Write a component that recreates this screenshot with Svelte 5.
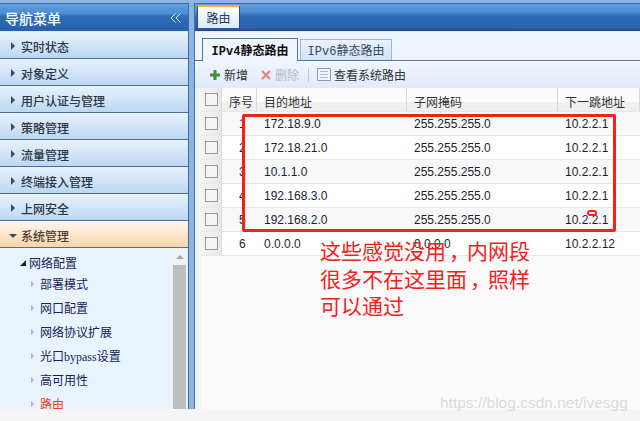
<script lang="ts">
    const navItems = ['实时状态', '对象定义', '用户认证与管理', '策略管理', '流量管理', '终端接入管理', '上网安全'];
    const treeItems = ['部署模式', '网口配置', '网络协议扩展', '光口bypass设置', '高可用性', '路由'];
    const routes = [
        { id: 1, dest: '172.18.9.0', mask: '255.255.255.0', hop: '10.2.2.1' },
        { id: 2, dest: '172.18.21.0', mask: '255.255.255.0', hop: '10.2.2.1' },
        { id: 3, dest: '10.1.1.0', mask: '255.255.255.0', hop: '10.2.2.1' },
        { id: 4, dest: '192.168.3.0', mask: '255.255.255.0', hop: '10.2.2.1' },
        { id: 5, dest: '192.168.2.0', mask: '255.255.255.0', hop: '10.2.2.1' },
        { id: 6, dest: '0.0.0.0', mask: '0.0.0.0', hop: '10.2.2.12' }
    ];
</script>

<div class="page">
    <div class="frame">
        <aside class="sidebar">
            <header class="side-head">
                <span>导航菜单</span>
                <svg width="12" height="10" viewBox="0 0 12 10" fill="none" stroke="#dce9f8" stroke-width="1">
                    <path d="M5.5 .5 1 5l4.5 4.5M10.5 .5 6 5l4.5 4.5" />
                </svg>
            </header>
            {#each navItems as item}
                <div class="nav-item"><i class="arrow"></i>{item}</div>
            {/each}
            <div class="nav-item active"><i class="arrow-down"></i>系统管理</div>
            <div class="tree">
                <div class="tree-body">
                    <div class="tree-root"><i class="corner"></i>网络配置</div>
                    {#each treeItems as item}
                        <div class="tree-leaf" class:current={item === '路由'}><i class="leaf-arrow"></i><span>{item}</span></div>
                    {/each}
                </div>
                <div class="scrollbar">
                    <div class="scroll-up"><i></i></div>
                    <div class="scroll-thumb"></div>
                </div>
            </div>
        </aside>

        <main class="main">
            <div class="tab-bar">
                <div class="tab">路由</div>
            </div>
            <div class="content">
                <div class="sub-tabs">
                    <div class="sub-tab on">IPv4静态路由</div>
                    <div class="sub-tab">IPv6静态路由</div>
                </div>
                <div class="toolbar">
                    <span class="tool">
                        <svg width="12" height="12" viewBox="0 0 12 12"><path d="M4.5 1h3v3.5H11v3H7.500V11h-3V7.500H1v-3h3.500z" fill="#3f8f3a" /></svg>
                        新增
                    </span>
                    <span class="tool off">
                        <svg width="12" height="12" viewBox="0 0 12 12"><path d="M2 2l8 8M10 2l-8 8" stroke="#e08a8a" stroke-width="2.400" /></svg>
                        删除
                    </span>
                    <i class="divider"></i>
                    <span class="tool">
                        <svg width="14" height="13" viewBox="0 0 14 13" fill="none" stroke="#8f9aa6"><path d="M.5 .5h13v12H.5z" fill="#f1f4f8" /><path d="M3 3.500h8M3 6.500h8M3 9.500h8" stroke="#b4bcc6" /></svg>
                        查看系统路由
                    </span>
                </div>
                <div class="grid">
                    <div class="row head">
                        <div class="cell check"><i class="box"></i></div>
                        <div class="cell num">序号</div>
                        <div class="cell">目的地址</div>
                        <div class="cell">子网掩码</div>
                        <div class="cell">下一跳地址</div>
                    </div>
                    {#each routes as route}
                        <div class="row" class:odd={route.id % 2 === 1 && route.id < 6}>
                            <div class="cell check"><i class="box"></i></div>
                            <div class="cell idx">{route.id}</div>
                            <div class="cell">{route.dest}</div>
                            <div class="cell">{route.mask}</div>
                            <div class="cell">{route.hop}</div>
                        </div>
                    {/each}
                </div>
            </div>
        </main>
    </div>
    <div class="foot"></div>

    <!-- annotation drawn over the screenshot -->
    <div class="mark-box"></div>
    <div class="mark-dot"></div>
    <p class="mark-text">这些感觉没用<span class="comma">，</span>内网段<br />很多不在这里面<span class="comma">，</span>照样<br />可以通过</p>
    <div class="watermark">https://blog.csdn.net/ivesgg</div>
</div>

<style>
    :global(body) {
        margin: 0;
    }

    .page {
        position: relative;
        width: 640px;
        height: 421px;
        overflow: hidden;
        font-family: "Noto Sans CJK SC", "Liberation Sans", sans-serif;
        font-size: 12px;
        background: #f5f5f5;
    }

    .frame {
        display: flex;
        gap: 5px;
        height: 406px;
        padding-top: 3px;
        background: #8db4e2;
    }

    .foot {
        height: 12px;
        background: #f5f5f5;
    }

    .sidebar {
        display: flex;
        flex-direction: column;
        width: 189px;
        flex: none;
        box-sizing: border-box;
        border-top: 1px solid #3d6ca5;
        border-right: 1px solid #41689a;
    }

    .side-head {
        display: flex;
        align-items: center;
        justify-content: space-between;
        height: 27px;
        padding: 0 6px 0 5px;
        flex: none;
        border-bottom: 1px solid #dbe8f7;
        background: linear-gradient(#629fe0 0, #4e8dd6 35%, #2f6db9 45%, #2660ae 100%);
        color: #fff;
        font-size: 14px;
        font-weight: 500;
    }

    .nav-item {
        display: flex;
        align-items: center;
        gap: 6px;
        height: 27px;
        box-sizing: border-box;
        padding: 2px 0 0 11px;
        flex: none;
        border-bottom: 1px solid #4c6f99;
        background: linear-gradient(#e9f2fc, #bcd7f2);
        color: #2b3644;
        font-size: 12px;
        font-weight: 500;
    }

    .nav-item.active {
        gap: 4px;
        padding-left: 9px;
        background: linear-gradient(#fff6ec, #fbd5ab);
        color: #4a4036;
    }

    .arrow {
        width: 0;
        height: 0;
        border-left: 4px solid #3b4a5c;
        border-top: 4px solid transparent;
        border-bottom: 4px solid transparent;
    }

    .arrow-down {
        width: 0;
        height: 0;
        margin-top: 2px;
        border-top: 4px solid #3b4a5c;
        border-left: 4px solid transparent;
        border-right: 4px solid transparent;
    }

    .tree {
        display: flex;
        flex: 1;
        min-height: 0;
        overflow: hidden;
        background: #e9f3fd;
    }

    .tree-body {
        flex: 1;
        padding-top: 6px;
        color: #14245a;
        font-family: "Liberation Serif", "Noto Sans CJK SC", serif;
        white-space: nowrap;
    }

    .tree-root {
        display: flex;
        align-items: center;
        gap: 3px;
        height: 18px;
        padding-left: 20px;
    }

    .corner {
        width: 0;
        height: 0;
        border-bottom: 6px solid #222;
        border-left: 6px solid transparent;
    }

    .tree-leaf {
        display: flex;
        align-items: center;
        gap: 6px;
        height: 24px;
        padding-left: 31px;
    }

    .tree-leaf.current {
        color: #f23a12;
    }

    .leaf-arrow {
        width: 0;
        height: 0;
        border-left: 3px solid #9fb2c6;
        border-top: 3.5px solid transparent;
        border-bottom: 3.5px solid transparent;
    }

    .scrollbar {
        display: flex;
        flex-direction: column;
        width: 13px;
        margin-right: 2px;
        margin-top: 1px;
    }

    .scroll-up {
        display: flex;
        align-items: center;
        justify-content: center;
        height: 16px;
        background: #f1f1f1;
    }

    .scroll-up i {
        border-bottom: 4px solid #a8a8a8;
        border-left: 4px solid transparent;
        border-right: 4px solid transparent;
    }

    .scroll-thumb {
        flex: 1;
        background: #bebebe;
    }

    .main {
        display: flex;
        flex-direction: column;
        flex: 1;
        min-width: 0;
        border-top: 1px solid #3d6ca5;
        border-left: 1px solid #3f6ea8;
    }

    .tab-bar {
        display: flex;
        height: 24px;
        padding: 1px 0 0 2px;
        flex: none;
        border-bottom: 2px solid #244f8c;
        background: linear-gradient(#639fe0 0, #4f8ed6 30%, #2f6cb8 50%, #2a60aa 100%);
    }

    .tab {
        display: flex;
        align-items: center;
        justify-content: center;
        width: 43px;
        height: 23px;
        box-sizing: border-box;
        border: 1px solid #244f8c;
        border-top: 2px solid #f2b134;
        border-bottom: none;
        background: linear-gradient(#fff, #dbe9f9);
        color: #253a5c;
    }

    .content {
        display: flex;
        flex-direction: column;
        flex: 1;
        min-height: 0;
        padding-top: 6px;
        border-top: 1px solid #dce9f8;
        background: #edf4fd;
    }

    .sub-tabs {
        display: flex;
        gap: 2px;
        height: 22px;
        padding-left: 7px;
        flex: none;
        border-bottom: 1px solid #56769c;
    }

    .sub-tab {
        display: flex;
        align-items: center;
        justify-content: center;
        width: 92px;
        height: 21px;
        margin-top: 1px;
        box-sizing: border-box;
        border: 1px solid #9db7d4;
        border-bottom: none;
        background: linear-gradient(#eaf2fc, #d2e3f6);
        color: #3b4a5c;
        font-family: "Liberation Mono", "Noto Sans CJK SC", monospace;
        font-size: 12px;
    }

    .sub-tab.on {
        width: 96px;
        height: 23px;
        margin-top: 0;
        border-color: #56769c;
        background: #f0f6fe;
        color: #111;
        font-weight: 700;
    }

    .toolbar {
        display: flex;
        align-items: center;
        gap: 12px;
        height: 27px;
        padding-left: 14px;
        flex: none;
        background: linear-gradient(#f1f6fd, #dfeafa);
        color: #333;
    }

    .tool {
        display: flex;
        align-items: center;
        gap: 3px;
    }

    .tool.off {
        color: #b4bcc6;
    }

    .divider {
        width: 1px;
        height: 14px;
        margin: 0 -4px 0 -3px;
        background: #b4cde8;
    }

    .grid {
        flex: 1;
        margin-left: 6px;
        background: #fafafa;
    }

    .row {
        display: grid;
        grid-template-columns: 21px 35px 150px 151px 1fr;
        height: 24px;
        box-sizing: border-box;
        border-bottom: 1px solid #e8e8e8;
        background: #fff;
        color: #1b2430;
        font-family: "Liberation Sans", "Noto Sans CJK SC", sans-serif;
    }

    .row.odd {
        background: #f8f8f8;
    }

    .row.head {
        background: linear-gradient(#fcfcfc 60%, #efefef 60%);
        color: #333;
    }

    .cell {
        display: flex;
        align-items: center;
        padding-left: 7px;
        overflow: hidden;
        white-space: nowrap;
    }

    .head .cell {
        padding-top: 3px;
        border-right: 1px solid #d8d8d8;
    }

    .check,
    .head .check {
        padding-left: 4px;
        padding-top: 0;
        background: linear-gradient(90deg, #f4f4f4, #e8e8e8);
        border-right: 1px solid #ddd;
    }

    .head .num {
        padding-left: 7px;
    }

    .idx {
        padding-left: 17px;
    }

    .box {
        width: 11px;
        height: 11px;
        border: 1px solid #999;
        background: #f4f4f4;
    }

    .mark-box {
        position: absolute;
        left: 242px;
        top: 114px;
        width: 368px;
        height: 112px;
        border: 3px solid #f5201a;
        border-radius: 2px;
    }

    .mark-dot {
        position: absolute;
        left: 587px;
        top: 210px;
        width: 10px;
        height: 6px;
        box-sizing: border-box;
        border: 2px solid #f5201a;
        border-radius: 3px;
        background: #fff;
    }

    .mark-text {
        position: absolute;
        left: 320px;
        top: 237px;
        margin: 0;
        color: #f5201a;
        font-size: 21px;
        line-height: 27.500px;
        white-space: nowrap;
    }

    .comma {
        margin-left: 3px;
        margin-right: -3px;
    }

    .watermark {
        position: absolute;
        left: 440px;
        top: 394px;
        color: rgba(190, 190, 190, 0.55);
        font-family: "Liberation Sans", sans-serif;
        font-size: 15.500px;
    }
</style>
